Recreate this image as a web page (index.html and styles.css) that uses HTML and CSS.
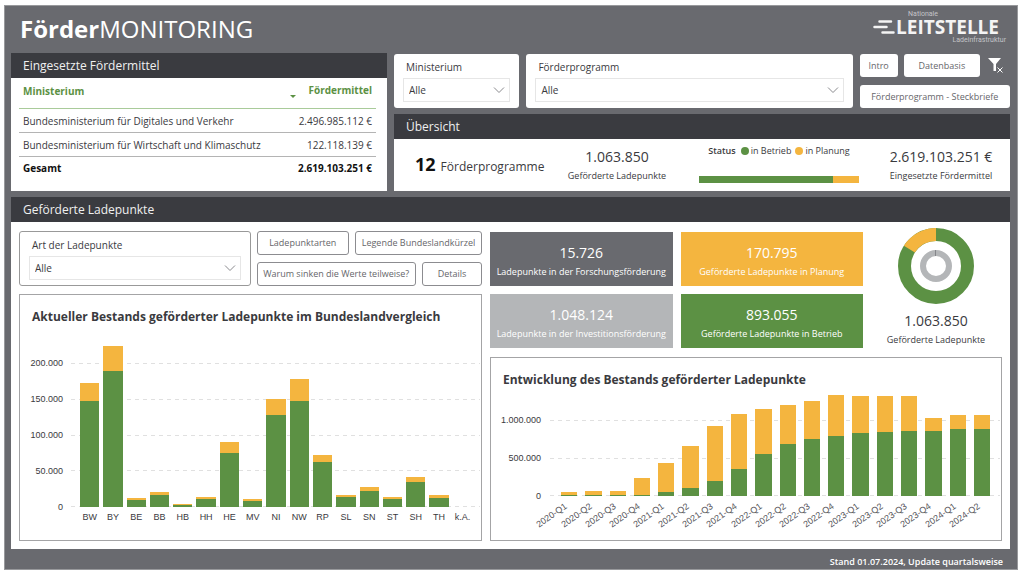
FILE: index.html
```html
<!DOCTYPE html>
<html lang="de">
<head>
<meta charset="utf-8">
<title>FörderMONITORING</title>
<link rel="stylesheet" href="styles.css">
</head>
<body>
<div class="report">
  <header class="top">
    <h1 class="title"><b>Förder</b>MONITORING</h1>
    <div class="logo">
      <span class="logo-over">Nationale</span>
      <span class="logo-main">
        <svg class="logo-mark" viewBox="0 0 22 14" aria-hidden="true"><path d="M6.500 1.500H18M1.500 7H13.500M9.500 12.500H20.500"/></svg>
        <span>LEITSTELLE</span>
      </span>
      <span class="logo-under">Ladeinfrastruktur</span>
    </div>
  </header>

  <main class="content">
    <div class="upper">
      <section class="panel">
        <h2 class="panel-head">Eingesetzte Fördermittel</h2>
        <div class="panel-body funds">
          <table class="funds-table">
            <thead><tr><th>Ministerium</th><th class="num"><span class="sort"></span>Fördermittel</th></tr></thead>
            <tbody>
              <tr><td>Bundesministerium für Digitales und Verkehr</td><td class="num">2.496.985.112 €</td></tr>
              <tr><td>Bundesministerium für Wirtschaft und Klimaschutz</td><td class="num">122.118.139 €</td></tr>
            </tbody>
            <tfoot><tr><td>Gesamt</td><td class="num">2.619.103.251 €</td></tr></tfoot>
          </table>
        </div>
      </section>

      <div class="right">
        <div class="filters">
          <div class="filter">
            <label for="min">Ministerium</label>
            <div class="drop"><select id="min"><option>Alle</option></select><svg class="chev" viewBox="0 0 12 8" aria-hidden="true"><path d="M1 1.500 6 6.500 11 1.500"/></svg></div>
          </div>
          <div class="filter">
            <label for="prog">Förderprogramm</label>
            <div class="drop"><select id="prog"><option>Alle</option></select><svg class="chev" viewBox="0 0 12 8" aria-hidden="true"><path d="M1 1.500 6 6.500 11 1.500"/></svg></div>
          </div>
          <div class="nav">
            <div class="nav-row">
              <button class="btn">Intro</button>
              <button class="btn btn-wide">Datenbasis</button>
              <button class="clear" aria-label="Filter löschen"><svg viewBox="0 0 16 17" aria-hidden="true"><path class="funnel" d="M0 1H13L8 7V14H5.500V7Z"/><path class="cross" d="M9.500 10.500 14.500 15.500M14.500 10.500 9.500 15.500"/></svg></button>
            </div>
            <button class="btn">Förderprogramm - Steckbriefe</button>
          </div>
        </div>

        <section class="panel">
          <h2 class="panel-head">Übersicht</h2>
          <div class="panel-body overview">
            <p class="programs"><b>12</b> Förderprogramme</p>
            <p class="kpi"><span class="kpi-value">1.063.850</span><span class="kpi-label">Geförderte Ladepunkte</span></p>
            <div class="status">
              <p class="legend"><b>Status</b><i class="dot green"></i>in Betrieb<i class="dot yellow"></i>in Planung</p>
              <div class="meter"><i class="green" style="width:84%"></i><i class="yellow" style="width:16%"></i></div>
            </div>
            <p class="kpi"><span class="kpi-value">2.619.103.251 €</span><span class="kpi-label">Eingesetzte Fördermittel</span></p>
          </div>
        </section>
      </div>
    </div>

    <section class="panel lower">
      <h2 class="panel-head">Geförderte Ladepunkte</h2>
      <div class="panel-body points">
        <div class="col-left">
          <div class="controls">
            <div class="filter outlined">
              <label for="art">Art der Ladepunkte</label>
              <div class="drop"><select id="art"><option>Alle</option></select><svg class="chev" viewBox="0 0 12 8" aria-hidden="true"><path d="M1 1.500 6 6.500 11 1.500"/></svg></div>
            </div>
            <div class="links">
              <div class="links-row"><button class="btn line grow-a">Ladepunktarten</button><button class="btn line grow-b">Legende Bundeslandkürzel</button></div>
              <div class="links-row"><button class="btn line grow-c">Warum sinken die Werte teilweise?</button><button class="btn line grow-d">Details</button></div>
            </div>
          </div>
          <section class="chart">
            <h3>Aktueller Bestands geförderter Ladepunkte im Bundeslandvergleich</h3>
            <div class="chart-area states">
              <ol class="axis"><li>200.000</li><li>150.000</li><li>100.000</li><li>50.000</li><li>0</li></ol>
              <div class="plot">
                <div class="grid"><i></i><i></i><i></i><i></i><i></i></div>
                <ul class="bars">
                  <li><i class="yellow" style="height:10.2%"></i><i class="green" style="height:58.9%"></i></li>
                  <li><i class="yellow" style="height:13.9%"></i><i class="green" style="height:75.7%"></i></li>
                  <li><i class="yellow" style="height:1.3%"></i><i class="green" style="height:3.9%"></i></li>
                  <li><i class="yellow" style="height:1.5%"></i><i class="green" style="height:6.9%"></i></li>
                  <li><i class="yellow" style="height:0.6%"></i><i class="green" style="height:1.3%"></i></li>
                  <li><i class="yellow" style="height:1.1%"></i><i class="green" style="height:4.3%"></i></li>
                  <li><i class="yellow" style="height:5.7%"></i><i class="green" style="height:30.2%"></i></li>
                  <li><i class="yellow" style="height:0.9%"></i><i class="green" style="height:3.6%"></i></li>
                  <li><i class="yellow" style="height:8.7%"></i><i class="green" style="height:51.1%"></i></li>
                  <li><i class="yellow" style="height:12.2%"></i><i class="green" style="height:58.7%"></i></li>
                  <li><i class="yellow" style="height:4.3%"></i><i class="green" style="height:24.8%"></i></li>
                  <li><i class="yellow" style="height:1.1%"></i><i class="green" style="height:5.7%"></i></li>
                  <li><i class="yellow" style="height:2.2%"></i><i class="green" style="height:9.1%"></i></li>
                  <li><i class="yellow" style="height:1.1%"></i><i class="green" style="height:4.6%"></i></li>
                  <li><i class="yellow" style="height:2.8%"></i><i class="green" style="height:13.7%"></i></li>
                  <li><i class="yellow" style="height:1.5%"></i><i class="green" style="height:5%"></i></li>
                  <li></li>
                </ul>
              </div>
              <ul class="cats"><li>BW</li><li>BY</li><li>BE</li><li>BB</li><li>HB</li><li>HH</li><li>HE</li><li>MV</li><li>NI</li><li>NW</li><li>RP</li><li>SL</li><li>SN</li><li>ST</li><li>SH</li><li>TH</li><li>k.A.</li></ul>
            </div>
          </section>
        </div>

        <div class="col-right">
          <div class="summary">
            <div class="tiles">
              <p class="tile slate"><span class="kpi-value">15.726</span><span class="kpi-label">Ladepunkte in der Forschungsförderung</span></p>
              <p class="tile yellow"><span class="kpi-value">170.795</span><span class="kpi-label">Geförderte Ladepunkte in Planung</span></p>
              <p class="tile silver"><span class="kpi-value">1.048.124</span><span class="kpi-label">Ladepunkte in der Investitionsförderung</span></p>
              <p class="tile green"><span class="kpi-value">893.055</span><span class="kpi-label">Geförderte Ladepunkte in Betrieb</span></p>
            </div>
            <div class="donut">
              <svg viewBox="0 0 76 76" role="img" aria-label="Anteile der geförderten Ladepunkte">
                <circle class="ring ring-green" cx="38" cy="38" r="31.500"/>
                <circle class="ring ring-yellow" cx="38" cy="38" r="31.500" pathLength="100" stroke-dasharray="16 84" stroke-dashoffset="-84" transform="rotate(-90 38 38)"/>
                <circle class="core" cx="38" cy="38" r="13"/>
                <path class="core-mark" d="M37.500 22V28"/>
              </svg>
              <p class="kpi"><span class="kpi-value">1.063.850</span><span class="kpi-label">Geförderte Ladepunkte</span></p>
            </div>
          </div>
          <section class="chart">
            <h3>Entwicklung des Bestands geförderter Ladepunkte</h3>
            <div class="chart-area trend">
              <ol class="axis"><li>1.000.000</li><li>500.000</li><li>0</li></ol>
              <div class="plot">
                <div class="grid"><i></i><i></i><i></i></div>
                <ul class="bars">
                  <li><i class="yellow" style="height:3%"></i><i class="green" style="height:0.9%"></i></li>
                  <li><i class="yellow" style="height:3.1%"></i><i class="green" style="height:1%"></i></li>
                  <li><i class="yellow" style="height:3%"></i><i class="green" style="height:1.1%"></i></li>
                  <li><i class="yellow" style="height:14.3%"></i><i class="green" style="height:1.2%"></i></li>
                  <li><i class="yellow" style="height:25.7%"></i><i class="green" style="height:3.2%"></i></li>
                  <li><i class="yellow" style="height:36.3%"></i><i class="green" style="height:7.3%"></i></li>
                  <li><i class="yellow" style="height:47.9%"></i><i class="green" style="height:13.5%"></i></li>
                  <li><i class="yellow" style="height:48%"></i><i class="green" style="height:24%"></i></li>
                  <li><i class="yellow" style="height:39.5%"></i><i class="green" style="height:36.8%"></i></li>
                  <li><i class="yellow" style="height:33.9%"></i><i class="green" style="height:45.9%"></i></li>
                  <li><i class="yellow" style="height:33%"></i><i class="green" style="height:50%"></i></li>
                  <li><i class="yellow" style="height:36%"></i><i class="green" style="height:52.3%"></i></li>
                  <li><i class="yellow" style="height:33%"></i><i class="green" style="height:55%"></i></li>
                  <li><i class="yellow" style="height:32.2%"></i><i class="green" style="height:55.8%"></i></li>
                  <li><i class="yellow" style="height:30.7%"></i><i class="green" style="height:57%"></i></li>
                  <li><i class="yellow" style="height:11.4%"></i><i class="green" style="height:57.3%"></i></li>
                  <li><i class="yellow" style="height:12.3%"></i><i class="green" style="height:58.5%"></i></li>
                  <li><i class="yellow" style="height:11.7%"></i><i class="green" style="height:59.1%"></i></li>
                </ul>
              </div>
              <ul class="cats tilted"><li><span>2020-Q1</span></li><li><span>2020-Q2</span></li><li><span>2020-Q3</span></li><li><span>2020-Q4</span></li><li><span>2021-Q1</span></li><li><span>2021-Q2</span></li><li><span>2021-Q3</span></li><li><span>2021-Q4</span></li><li><span>2022-Q1</span></li><li><span>2022-Q2</span></li><li><span>2022-Q3</span></li><li><span>2022-Q4</span></li><li><span>2023-Q1</span></li><li><span>2023-Q2</span></li><li><span>2023-Q3</span></li><li><span>2023-Q4</span></li><li><span>2024-Q1</span></li><li><span>2024-Q2</span></li></ul>
            </div>
          </section>
        </div>
      </div>
    </section>
  </main>
  <footer class="foot">Stand 01.07.2024, Update quartalsweise</footer>
</div>
</body>
</html>
```
FILE: styles.css
```css
* { box-sizing: border-box; }
body, h1, h2, h3, p, ul, ol { margin: 0; padding: 0; }
ul, ol { list-style: none; }
body {
  padding: 5px 6px 3px 4px;
  background: #fff;
  color: #3a3a3e;
  font-family: "Open Sans", "Noto Sans", sans-serif;
  font-size: 10px;
  line-height: 14px;
}
button, select { font: inherit; color: inherit; }

.green { background: #5c9144; }
.yellow { background: #f4b53f; }
.slate { background: #696a6f; }
.silver { background: #b4b6b8; }

.report {
  background: #696a6f;
  border: 1px solid #98999c;
  padding: 0 7px 0 6px;
}
.top {
  display: flex;
  justify-content: space-between;
  height: 47px;
  padding: 0 4px 0 9px;
}
.title {
  color: #fff;
  font-size: 24px;
  line-height: 46px;
  font-weight: 400;
}
.logo {
  display: flex;
  flex-direction: column;
  padding-top: 4px;
  color: #f4f4f4;
}
.logo-over, .logo-under {
  font-family: Roboto, sans-serif;
  font-size: 7px;
  line-height: 8px;
  color: #c4c4c8;
}
.logo-over { padding-left: 35px; }
.logo-under { text-align: right; }
.logo-main {
  display: flex;
  align-items: center;
  gap: 1px;
  padding-right: 7px;
  font-size: 19px;
  line-height: 18px;
  font-weight: 700;
}
.logo-mark { width: 22px; height: 14px; fill: none; stroke: #f4f4f4; stroke-width: 2.5; stroke-linecap: round; }

.content { display: grid; grid-template-columns: minmax(0, 1fr); gap: 6px; }
.upper { display: grid; grid-template-columns: minmax(0, 376fr) minmax(0, 616fr); gap: 7px; }
.panel { display: flex; flex-direction: column; }
.panel-head {
  padding: 0 12px;
  background: #3a3b40;
  color: #f0f0f0;
  font-size: 12px;
  line-height: 25px;
  font-weight: 400;
}
.panel-body { flex: 1; background: #fff; }

.funds { padding: 0 11px 0 8px; }
.funds-table { width: 100%; border-collapse: collapse; }
.funds-table th, .funds-table td { padding: 0 4px; text-align: left; height: 24px; }
.funds-table th { height: 30px; padding-bottom: 4px; color: #5c9144; font-weight: 700; border-bottom: 1px solid #a9cb9a; }
.funds-table tbody td { padding-top: 2px; border-bottom: 1px solid #b4b4b4; }
.funds-table tfoot td { color: #111; font-weight: 700; }
.funds-table .num { text-align: right; }
.sort {
  display: inline-block;
  margin-right: 12px;
  border: 3px solid transparent;
  border-top-color: #5c9144;
  border-bottom: 0;
  vertical-align: -4px;
}

.right { display: grid; gap: 6px; grid-template-columns: minmax(0, 1fr); grid-template-rows: auto 1fr; }
.filters { display: grid; grid-template-columns: minmax(0, 125fr) minmax(0, 325fr) minmax(0, 150fr); gap: 7px; padding-top: 1px; }
.filter {
  display: flex;
  flex-direction: column;
  gap: 4px;
  padding: 6px 9px 5px;
  border-radius: 3px;
  background: #fff;
}
.filter label { padding-left: 3px; }
.outlined { border: 1px solid #999; }
.drop { display: grid; grid-template-columns: 1fr auto; align-items: center; border: 1px solid #e6e6e6; }
.drop select {
  grid-area: 1 / 1 / 2 / 3;
  width: 100%;
  height: 22px;
  padding: 0 5px;
  border: 0;
  background: none;
  appearance: none;
}
.chev { grid-area: 1 / 2; width: 12px; height: 8px; margin-right: 4px; fill: none; stroke: #8a8a8e; pointer-events: none; }

.nav { display: grid; gap: 8px; }
.nav-row { display: flex; gap: 6px; }
.btn {
  flex: 2 1 0;
  padding: 0;
  border: 0;
  border-radius: 3px;
  background: #fff;
  color: #66666a;
  font-size: 9px;
  line-height: 14px;
  white-space: nowrap;
}
.nav .btn { height: 23px; }
.btn-wide { flex-grow: 4; }
.clear { width: 24px; padding: 0; border: 0; background: none; }
.clear svg { display: block; width: 16px; height: 17px; margin-left: 2px; }
.funnel { fill: #fff; }
.cross { fill: none; stroke: #fff; }
.line { border: 1px solid #8c8c90; }

.overview {
  display: grid;
  grid-template-columns: minmax(0, 168fr) minmax(0, 110fr) minmax(0, 214fr) minmax(0, 124fr);
  align-items: center;
  min-height: 52px;
}
.programs { display: flex; align-items: baseline; gap: 5px; padding-left: 21px; font-size: 12px; line-height: 20px; white-space: nowrap; }
.programs b { font-size: 18px; color: #111; }
.kpi, .tile { display: flex; flex-direction: column; align-items: center; white-space: nowrap; }
.kpi-value { font-size: 14px; line-height: 20px; }
.kpi-label { font-size: 9px; line-height: 18px; }
.overview .kpi { padding-top: 2px; }
.overview .kpi:last-child { padding-right: 14px; }
.status { display: grid; gap: 19px; width: 160px; justify-self: center; padding-bottom: 2px; }
.legend { display: flex; align-items: center; justify-content: center; gap: 2px; font-size: 9px; white-space: nowrap; line-height: 12px; }
.legend b { margin-right: 3px; font-weight: 600; }
.dot { width: 8px; height: 8px; border-radius: 50%; }
.dot.yellow { margin-left: 2px; }
.meter { display: flex; height: 7px; }

.points {
  display: grid;
  grid-template-columns: minmax(0, 463fr) minmax(0, 512fr);
  gap: 8px;
  padding: 9px 8px 8px;
}
.col-left, .col-right { display: flex; flex-direction: column; gap: 8px; }
.controls { display: grid; grid-template-columns: minmax(0, 231fr) minmax(0, 225fr); gap: 6px; }
.links { display: grid; gap: 6px; }
.links-row { display: flex; gap: 6px; }
.links .btn { height: 24px; }
.links .grow-a { flex: 92 1 0; }
.links .grow-b { flex: 127 1 0; }
.links .grow-c { flex: 160 1 0; }
.links .grow-d { flex: 59 1 0; }

.chart { flex: 1; border: 1px solid #a4a4a6; padding: 14px 1px 8px 8px; }
.chart h3 { padding-left: 4px; font-size: 12px; line-height: 16px; font-weight: 700; white-space: nowrap; }
.chart-area {
  display: grid;
  font-family: "Liberation Sans", sans-serif;
  font-size: 9px;
  line-height: 10px;
}
.states { grid-template: 180px 24px / 35px minmax(0, 1fr); column-gap: 8px; margin-top: 2px; }
.trend { grid-template: 114px 36px / 42px minmax(0, 1fr); column-gap: 9px; margin-top: -6px; }
.axis, .grid { display: flex; flex-direction: column; justify-content: space-between; }
.axis { text-align: right; }
.states .axis { padding-top: 31px; margin-bottom: -5px; }
.trend .axis { padding-top: 33px; margin-bottom: -5px; }
.plot { display: grid; }
.grid, .bars { grid-area: 1 / 1; }
.states .grid { padding-top: 36px; }
.trend .grid { padding-top: 38px; }
.grid i { height: 1px; background: repeating-linear-gradient(90deg, #e0e0e0 0 4px, transparent 4px 8px); }
.bars, .cats { display: flex; padding: 0 6px 0 7px; }
.bars li, .cats li { flex: 1 1 0; min-width: 0; }
.bars li { display: flex; flex-direction: column; justify-content: flex-end; padding: 0 2px; }
.trend .bars li { padding: 0 4px; }
.cats { grid-column: 2; padding-top: 5px; }
.cats li { display: flex; justify-content: center; white-space: nowrap; }
.tilted { color: #55555a; }
.tilted li { justify-content: flex-end; padding-right: 18px; }
.tilted span { transform: rotate(-35deg); transform-origin: 100% 0; }

.summary { display: grid; grid-template-columns: minmax(0, 373fr) minmax(0, 132fr); gap: 7px; }
.tiles { display: grid; grid-template-columns: minmax(0, 1fr) minmax(0, 1fr); gap: 7px 8px; padding-top: 1px; }
.tile { justify-content: center; height: 54px; padding-top: 5px; color: #fff; }
.donut { display: flex; flex-direction: column; align-items: center; margin-top: -3px; }
.donut svg { width: 76px; height: 76px; margin-bottom: 7px; }
.ring, .core { fill: none; stroke-width: 13; }
.ring-green { stroke: #5c9144; }
.ring-yellow { stroke: #f4b53f; }
.core { stroke: #b4b6b8; stroke-width: 6; }
.core-mark { stroke: #85868a; }

.foot {
  padding: 6px 7px 0 0;
  color: #fff;
  font-size: 9px;
  line-height: 14px;
  font-weight: 600;
  text-align: right;
}
```
